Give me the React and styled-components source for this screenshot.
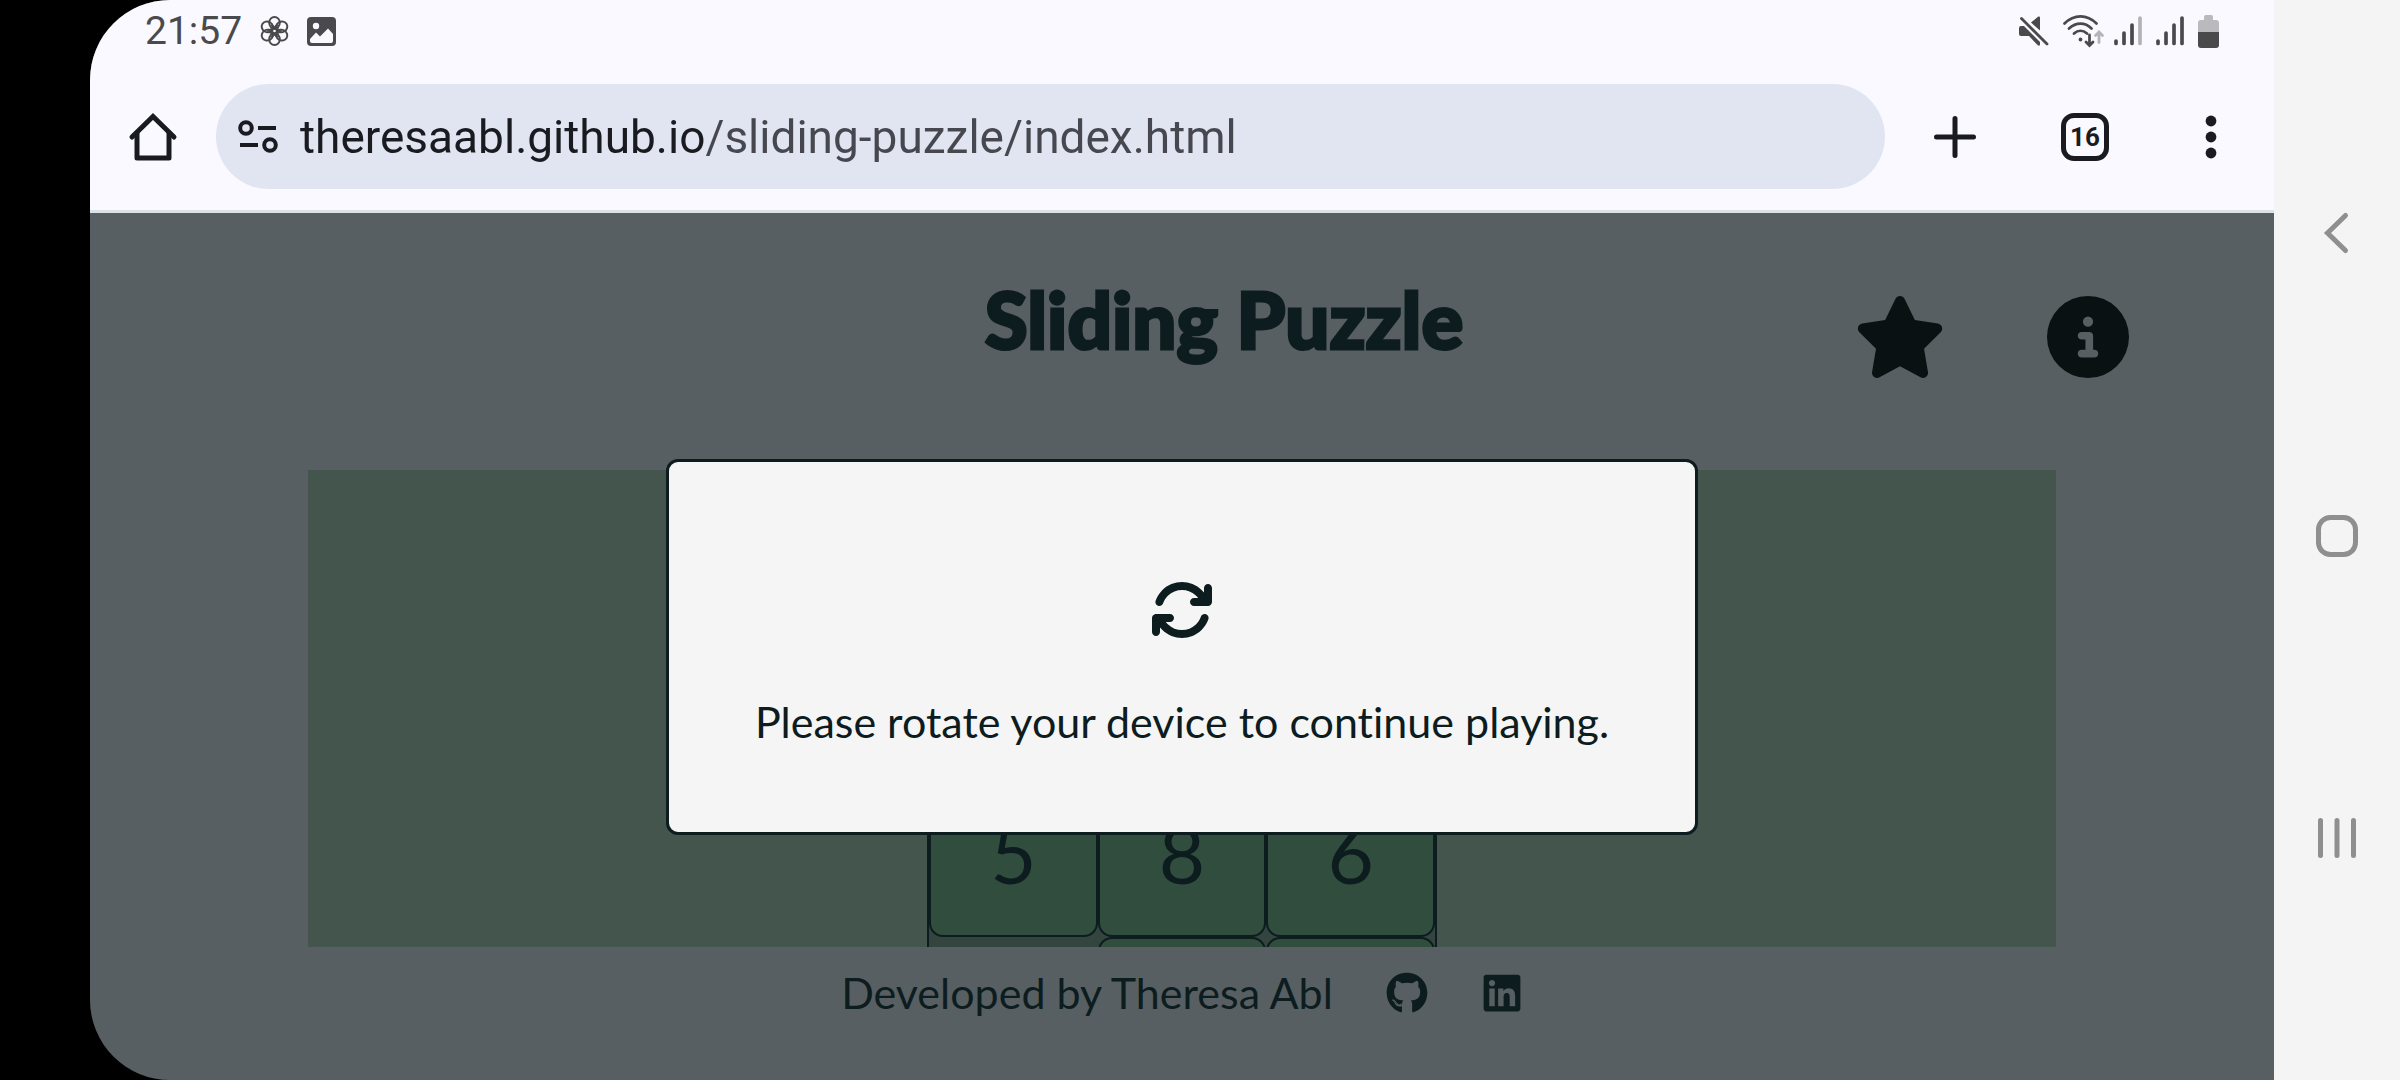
import React from "react";
import styled, { createGlobalStyle } from "styled-components";
import { FaStar, FaCircleInfo, FaArrowsRotate, FaGithub, FaLinkedin } from "react-icons/fa6";

const GlobalStyle = createGlobalStyle`
  *, *::before, *::after { box-sizing: border-box; }
  body { margin: 0; background: #000; font-family: Lato, "Open Sans", sans-serif; font-variant-ligatures: none; }
  svg { display: block; flex: none; overflow: visible; }
`;

const ink = "#0d1c1e";
const chromeInk = "#1a1b20";

const Device = styled.div`
  display: flex;
  min-height: 100vh;
  padding-left: 90px;
  background: linear-gradient(to right, #000 50%, #f4f4f4 50%);
`;

const Screen = styled.div`
  flex: 1;
  min-width: 0;
  display: flex;
  flex-direction: column;
  overflow: hidden;
  border-radius: 80px 0 0 80px;
  background: #575f62;
`;

const BrowserChrome = styled.header`
  background: #faf9ff;
  border-bottom: 3px solid #dde1e8;
  color: ${chromeInk};
  font-family: Roboto, sans-serif;
`;

const StatusBar = styled.div`
  display: flex;
  align-items: center;
  justify-content: space-between;
  height: 62px;
  padding: 0 55px;
  color: #4a4a4c;
`;

const StatusGroup = styled.div`
  display: flex;
  align-items: center;
  gap: ${(p) => p.$gap}px;
`;

const Clock = styled.time`
  font-size: 39px;
  line-height: 60px;
`;

const AddressRow = styled.div`
  display: flex;
  align-items: center;
  padding: 22px 36px 21px 36px;
`;

const IconButton = styled.button`
  display: flex;
  align-items: center;
  justify-content: center;
  flex: none;
  width: ${(p) => p.$size || 54}px;
  height: ${(p) => p.$size || 54}px;
  padding: 0;
  border: 0;
  background: none;
  color: inherit;
`;

const Omnibox = styled.label`
  flex: 1;
  display: flex;
  align-items: center;
  gap: 22px;
  height: 105px;
  margin-left: 36px;
  padding: 0 40px 0 22px;
  border-radius: 53px;
  background: #e1e5f2;
`;

const AddressInput = styled.input`
  flex: 1;
  min-width: 0;
  height: 64px;
  padding: 0;
  border: 0;
  outline: 0;
  font: 400 46px/64px Roboto, sans-serif;
  color: transparent;
  background: linear-gradient(to right, ${chromeInk} 405px, #46474f 405px);
  background-clip: text;
  -webkit-background-clip: text;
`;

const ChromeActions = styled.div`
  display: flex;
  align-items: center;
  gap: 75px;
  margin-left: 39px;
`;

const TabCount = styled.button`
  width: 48px;
  height: 48px;
  padding: 0;
  border: 5px solid ${chromeInk};
  border-radius: 13px;
  background: none;
  color: ${chromeInk};
  font: 700 26px/38px Roboto, sans-serif;
`;

const Page = styled.div`
  position: relative;
  flex: 1;
  display: flex;
  flex-direction: column;
  color: ${ink};
`;

const PageHeader = styled.div`
  display: grid;
  grid-template-columns: 1fr auto 1fr;
  align-items: start;
  height: 257px;
  padding: 58px 145px 0 229px;
`;

const Title = styled.h1`
  grid-column: 2;
  margin: 0;
  font-size: 78px;
  font-weight: 900;
  line-height: 96px;
  white-space: nowrap;
  -webkit-text-stroke: 3px ${ink};
`;

const HeaderActions = styled.div`
  display: flex;
  justify-content: flex-end;
  gap: 101px;
  padding-top: 25px;
  color: #0a1113;
`;

const HeaderButton = styled.button`
  padding: 0;
  border: 0;
  background: none;
  color: inherit;
  font-size: 82px;
`;

const StarIcon = styled(FaStar)`
  width: 92px;
`;

const GameArea = styled.main`
  flex: none;
  display: flex;
  justify-content: center;
  align-items: flex-start;
  width: 80%;
  height: 477px;
  margin: 0 auto;
  padding-top: 127px;
  overflow: hidden;
  background: #44554e;
`;

const Board = styled.div`
  display: grid;
  grid-template-columns: repeat(3, 1fr);
  grid-auto-rows: 169px;
  width: 510px;
  border: 2px solid ${ink};
  background: #34453f;
`;

const Tile = styled.button`
  padding: 0;
  border: 2px solid ${ink};
  border-radius: 14px;
  background: #314d3e;
  color: ${ink};
  font: 400 80px/1 Lato, sans-serif;
`;

const Footer = styled.footer`
  display: flex;
  align-items: center;
  justify-content: center;
  gap: 53px;
  padding-top: 18px;
  font-size: 43px;
  line-height: 56px;
`;

const SocialLink = styled.a`
  color: inherit;
  font-size: 42px;
`;

const Backdrop = styled.div`
  position: absolute;
  inset: 0;
  display: flex;
  align-items: center;
  justify-content: center;
`;

const Dialog = styled.section`
  display: flex;
  flex-direction: column;
  align-items: center;
  gap: 50px;
  padding: 116px 83px 80px;
  border: 3px solid ${ink};
  border-radius: 12px;
  background: #f5f5f5;
  font-size: 64px;
`;

const DialogText = styled.p`
  margin: 0;
  width: 860px;
  display: flex;
  justify-content: center;
  white-space: nowrap;
  font-size: 43px;
  line-height: 60px;
`;

const SystemNav = styled.nav`
  display: flex;
  flex-direction: column;
  align-items: center;
  justify-content: space-between;
  width: 126px;
  padding: 211px 0 220px;
  background: #f4f4f4;
  color: #8f8f8f;
`;

const FlowerIcon = () => (
  <svg width="29" height="32" viewBox="-15 -16 30 32" fill="none" stroke="currentColor" strokeWidth="2">
    {[0, 60, 120, 180, 240, 300].map((a) => (
      <ellipse key={a} cx="0" cy="-8.5" rx="5.5" ry="6" transform={`rotate(${a})`} />
    ))}
    {[0, 60, 120].map((a) => (
      <ellipse key={a} cx="0" cy="0" rx="2" ry="7" strokeWidth="1.4" transform={`rotate(${a + 30})`} />
    ))}
  </svg>
);

const PhotoIcon = () => (
  <svg width="29" height="29" viewBox="0 0 29 29">
    <rect width="29" height="29" rx="4" fill="currentColor" />
    <circle cx="9" cy="9" r="3.2" fill="#faf9ff" />
    <path d="M3 22 9 15.5 13 19.5 21 11.5 26 17V24a2 2 0 0 1-2 2H5a2 2 0 0 1-2-2Z" fill="#faf9ff" />
  </svg>
);

const MuteIcon = () => (
  <svg width="30" height="30" viewBox="0 0 30 30">
    <path d="M0 12a2 2 0 0 1 2-2h3L21 26v2c0 2-1 2-2.5 1L10 20H2a2 2 0 0 1-2-2ZM12 6.500 19 .8c1-.8 2-.3 2 1V14.500Z" fill="currentColor" />
    <path d="M2.500 2.500 28 28" stroke="currentColor" strokeWidth="2.800" strokeLinecap="round" />
  </svg>
);

const WifiIcon = () => (
  <svg width="37" height="32" viewBox="0 0 37 32" fill="none" stroke="currentColor" strokeWidth="2.800" strokeLinecap="round">
    <path d="M1.500 8.500C11-1 24-1 33.500 8.500M6 13.500c7-6.500 16-6.500 22.500 0M11 18.500c4-3.500 9-3.500 13 0" />
    <circle cx="17.500" cy="24.500" r="1.200" fill="currentColor" strokeWidth="1.500" />
    <path d="M26.500 20v10M23 27l3.500 3.500L30 27" />
    <path d="M36 27.500V17M32.500 20.500 36 17l3.500 3.500" opacity=".4" />
  </svg>
);

const SignalIcon = ({ weak }) => (
  <svg width="28" height="30" viewBox="0 0 28 30" stroke="currentColor" strokeWidth="3.700" strokeLinecap="round">
    <path d="M2 25v2.500M10 17v10.500M18 9v18.500" />
    <path d="M26 2v25.500" opacity={weak ? 0.4 : 1} />
  </svg>
);

const BatteryIcon = () => (
  <svg width="21" height="33" viewBox="0 0 21 33">
    <path d="M6 2a2 2 0 0 1 2-2h5a2 2 0 0 1 2 2v3h3a3 3 0 0 1 3 3v9H0V8a3 3 0 0 1 3-3h3Z" fill="#bab9be" />
    <path d="M0 17h21v13a3 3 0 0 1-3 3H3a3 3 0 0 1-3-3Z" fill="currentColor" />
  </svg>
);

const HomeIcon = () => (
  <svg width="48" height="48" viewBox="0 0 48 48" fill="none" stroke="currentColor" strokeWidth="5" strokeLinecap="round" strokeLinejoin="round">
    <path d="M3 24 24 3.500 45 24" strokeLinejoin="miter" />
    <path d="M8 20v25h32V20" />
  </svg>
);

const SiteInfoIcon = () => (
  <svg width="40" height="34" viewBox="0 0 40 34" fill="none" stroke="currentColor" strokeWidth="4">
    <circle cx="8" cy="8" r="5.800" />
    <circle cx="32" cy="25" r="5.800" />
    <path d="M20 8h18M2 25h18" />
  </svg>
);

const PlusIcon = () => (
  <svg width="44" height="44" viewBox="0 0 44 44" stroke="currentColor" strokeWidth="5" strokeLinecap="round">
    <path d="M22 3.500v37M3.500 22h37" />
  </svg>
);

const MenuIcon = () => (
  <svg width="12" height="44" viewBox="0 0 12 44" fill="currentColor">
    <circle cx="6" cy="6" r="5.400" />
    <circle cx="6" cy="22" r="5.400" />
    <circle cx="6" cy="38" r="5.400" />
  </svg>
);

const NavIcon = ({ children }) => (
  <svg width="44" height="44" viewBox="0 0 44 44" fill="none" stroke="currentColor" strokeWidth="5" strokeLinecap="round">
    {children}
  </svg>
);

const tiles = ["", "", "", "5", "8", "6", null, "", ""];

export default function App() {
  return (
    <Device>
      <GlobalStyle />
      <Screen>
        <BrowserChrome>
          <StatusBar>
            <StatusGroup $gap={18}>
              <Clock>21:57</Clock>
              <FlowerIcon />
              <PhotoIcon />
            </StatusGroup>
            <StatusGroup $gap={14}>
              <MuteIcon />
              <WifiIcon />
              <SignalIcon weak />
              <SignalIcon />
              <BatteryIcon />
            </StatusGroup>
          </StatusBar>
          <AddressRow>
            <IconButton aria-label="Home">
              <HomeIcon />
            </IconButton>
            <Omnibox>
              <SiteInfoIcon />
              <AddressInput
                aria-label="Address"
                readOnly
                value="theresaabl.github.io/sliding-puzzle/index.html"
              />
            </Omnibox>
            <ChromeActions>
              <IconButton $size={62} aria-label="New tab">
                <PlusIcon />
              </IconButton>
              <TabCount aria-label="16 open tabs">16</TabCount>
              <IconButton aria-label="Menu">
                <MenuIcon />
              </IconButton>
            </ChromeActions>
          </AddressRow>
        </BrowserChrome>

        <Page>
          <PageHeader>
            <Title>Sliding Puzzle</Title>
            <HeaderActions>
              <HeaderButton aria-label="High scores">
                <StarIcon />
              </HeaderButton>
              <HeaderButton aria-label="Information">
                <FaCircleInfo />
              </HeaderButton>
            </HeaderActions>
          </PageHeader>

          <GameArea>
            <Board>
              {tiles.map((value, i) =>
                value === null ? <span key={i} /> : <Tile key={i}>{value}</Tile>
              )}
            </Board>
          </GameArea>

          <Footer>
            <span>Developed by Theresa Abl</span>
            <SocialLink href="#github" aria-label="GitHub">
              <FaGithub />
            </SocialLink>
            <SocialLink href="#linkedin" aria-label="LinkedIn">
              <FaLinkedin />
            </SocialLink>
          </Footer>

          <Backdrop>
            <Dialog role="dialog">
              <FaArrowsRotate />
              <DialogText>Please rotate your device to continue playing.</DialogText>
            </Dialog>
          </Backdrop>
        </Page>
      </Screen>

      <SystemNav>
        <IconButton $size={44} aria-label="Back">
          <NavIcon>
            <path d="M30.500 4.500 12.500 22l18 17.500" />
          </NavIcon>
        </IconButton>
        <IconButton $size={44} aria-label="Home screen">
          <NavIcon>
            <rect x="3.500" y="3.500" width="37" height="37" rx="12" />
          </NavIcon>
        </IconButton>
        <IconButton $size={44} aria-label="Recent apps">
          <NavIcon>
            <path d="M5.500 4.500v35M22 4.500v35M38.500 4.500v35" />
          </NavIcon>
        </IconButton>
      </SystemNav>
    </Device>
  );
}
